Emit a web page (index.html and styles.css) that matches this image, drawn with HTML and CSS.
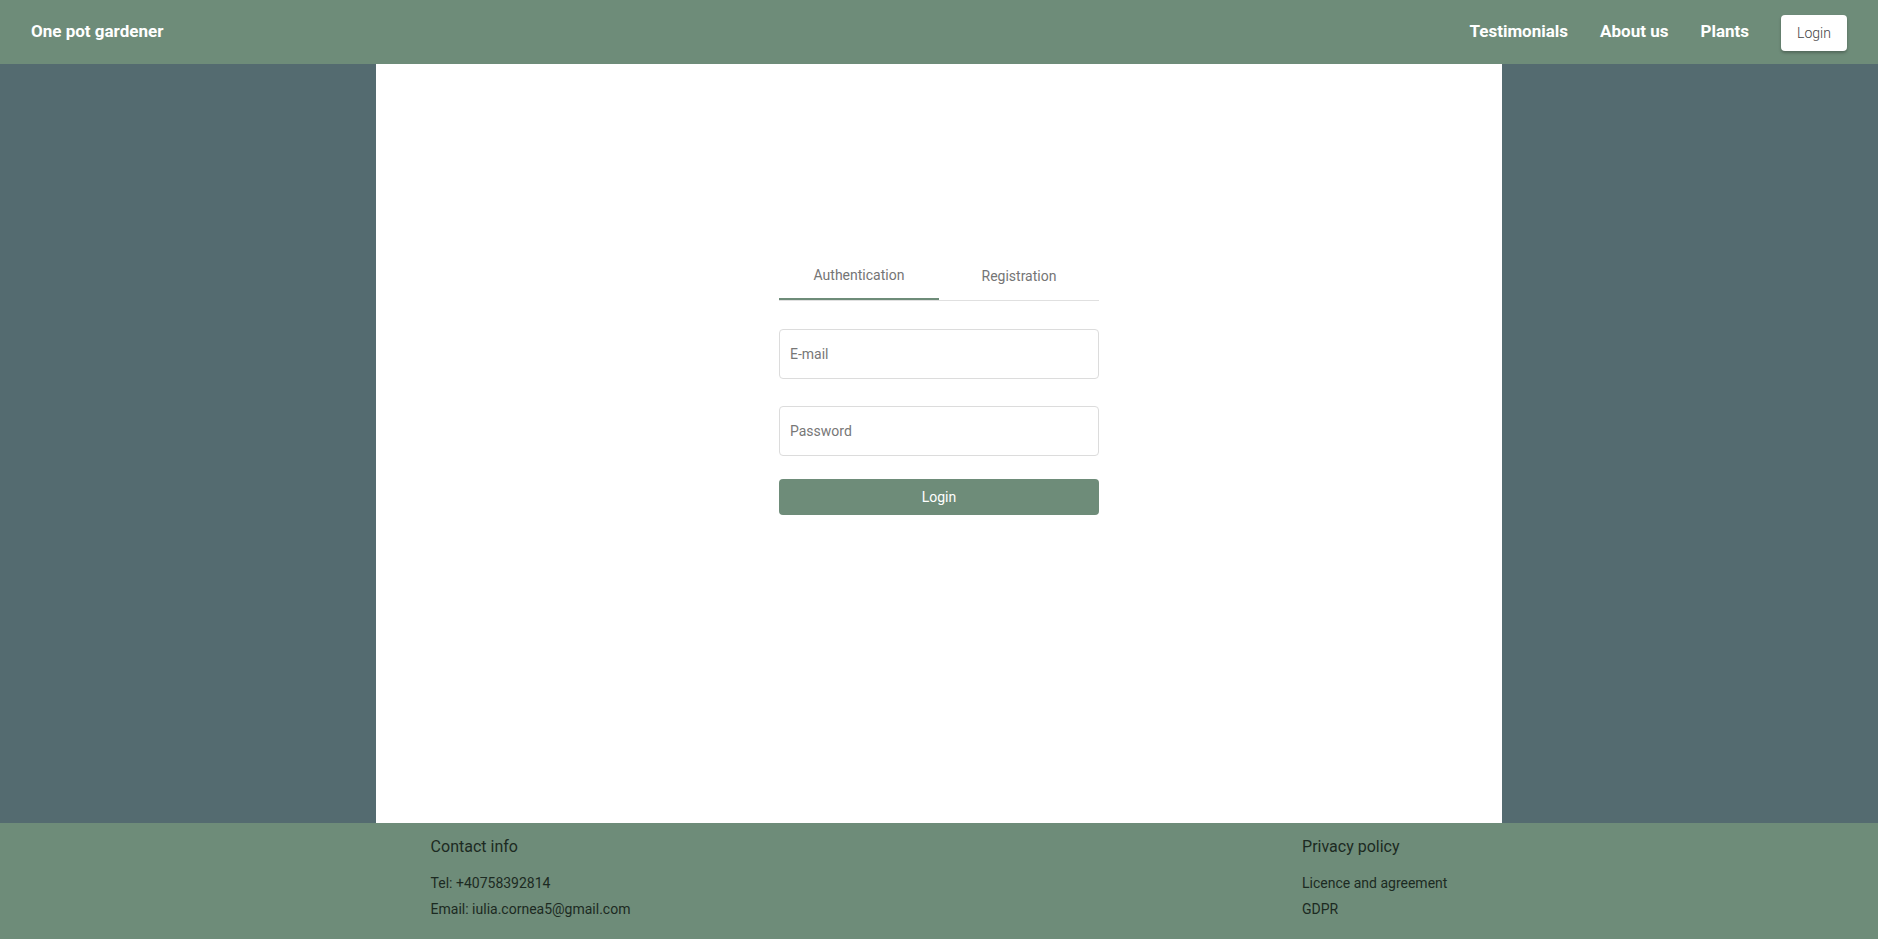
FILE: index.html
```html
<!DOCTYPE html>
<html lang="en">
<head>
<meta charset="utf-8">
<title>One pot gardener</title>
<link rel="stylesheet" href="styles.css">
</head>
<body>
<header class="topbar">
  <div class="brand">One pot gardener</div>
  <nav class="nav">
    <a class="nav-link" href="#">Testimonials</a>
    <a class="nav-link" href="#">About us</a>
    <a class="nav-link" href="#">Plants</a>
    <button class="nav-login">Login</button>
  </nav>
</header>
<main class="main">
  <section class="panel">
    <div class="auth">
      <div class="tabs">
        <div class="tab tab-active">Authentication</div>
        <div class="tab">Registration</div>
      </div>
      <form class="form">
        <input class="field" type="text" placeholder="E-mail">
        <input class="field" type="password" placeholder="Password">
        <button class="submit" type="button">Login</button>
      </form>
    </div>
  </section>
</main>
<footer class="footer">
  <div class="footer-inner">
    <div class="fcol">
      <div class="fhead">Contact info</div>
      <div class="fitem">Tel: +40758392814</div>
      <div class="fitem">Email: iulia.cornea5@gmail.com</div>
    </div>
    <div class="fcol">
      <div class="fhead">Privacy policy</div>
      <div class="fitem">Licence and agreement</div>
      <div class="fitem">GDPR</div>
    </div>
  </div>
</footer>
</body>
</html>
```
FILE: styles.css
```css
* { box-sizing: border-box; }
html, body { height: 100%; }
body {
  margin: 0;
  font-family: Roboto, "Liberation Sans", Arial, sans-serif;
  display: flex;
  flex-direction: column;
  background: #546b70;
}
.topbar {
  height: 64px;
  flex: none;
  background: #6e8c79;
  display: flex;
  align-items: center;
  justify-content: space-between;
  padding: 0 31px;
}
.brand {
  color: #fff;
  font-weight: 700;
  font-size: 17px;
  margin-top: -2px;
}
.nav {
  display: flex;
  align-items: center;
  gap: 32px;
}
.nav-link {
  color: #fff;
  text-decoration: none;
  font-weight: 700;
  font-size: 17px;
  margin-top: -3px;
}
.nav-login {
  width: 66px;
  height: 36px;
  margin-top: 2px;
  background: #fff;
  border: none;
  border-radius: 4px;
  box-shadow: 0 2px 3px rgba(0,0,0,0.25);
  font-family: inherit;
  font-weight: 300;
  font-size: 14px;
  color: #444;
}
.main {
  flex: 1;
  display: flex;
  justify-content: center;
  background: #546b70;
}
.panel {
  width: 60%;
  background: #fff;
  display: flex;
  justify-content: center;
  padding-top: 188px;
}
.auth { width: 320px; }
.tabs {
  display: flex;
  border-bottom: 1px solid #e0e0e0;
}
.tab {
  flex: 1;
  height: 48px;
  display: flex;
  align-items: center;
  justify-content: center;
  font-size: 14px;
  color: #757575;
}
.tab-active {
  border-bottom: 2px solid #6e8c79;
  margin-bottom: -1px;
}
.form {
  display: flex;
  flex-direction: column;
  padding-top: 28px;
}
.field {
  height: 50px;
  border: 1px solid #dcdcdc;
  border-radius: 4px;
  padding: 0 10px;
  font-family: inherit;
  font-size: 14px;
  color: #333;
  margin-bottom: 27px;
}
.field::placeholder { color: #777; }
.field + .field { margin-bottom: 23px; }
.submit {
  height: 36px;
  border: none;
  border-radius: 4px;
  background: #6e8c79;
  color: #fff;
  font-family: inherit;
  font-size: 14px;
}
.footer {
  height: 116px;
  flex: none;
  background: #6e8c79;
  display: flex;
  justify-content: center;
}
.footer-inner {
  width: 60%;
  display: flex;
  justify-content: space-between;
  padding: 14px 55px 0;
}
.fhead {
  font-size: 16px;
  color: #1c2a22;
  line-height: 20px;
  margin-bottom: 13px;
}
.fitem {
  font-size: 14px;
  color: #1c2a22;
  line-height: 26px;
}
```
